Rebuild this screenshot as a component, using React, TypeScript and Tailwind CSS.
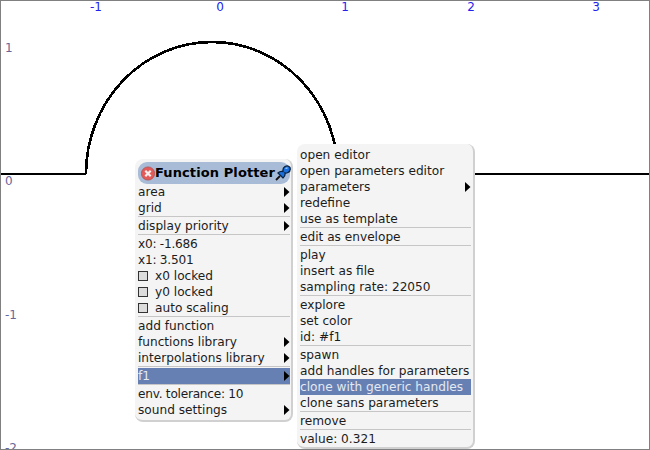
const font = "[font-family:'DejaVu_Sans',sans-serif]";

type Item =
  | { sep: true }
  | { label: string; arrow?: boolean; selected?: boolean; check?: boolean; tight?: boolean };

const leftItems: Item[] = [
  { label: "area", arrow: true },
  { label: "grid", arrow: true },
  { sep: true },
  { label: "display priority", arrow: true },
  { sep: true },
  { label: "x0: -1.686", tight: true },
  { label: "x1: 3.501", tight: true },
  { label: "x0 locked", check: true },
  { label: "y0 locked", check: true },
  { label: "auto scaling", check: true },
  { sep: true },
  { label: "add function" },
  { label: "functions library", arrow: true },
  { label: "interpolations library", arrow: true },
  { sep: true },
  { label: "f1", arrow: true, selected: true },
  { sep: true },
  { label: "env. tolerance: 10", tight: true },
  { label: "sound settings", arrow: true },
];

const rightItems: Item[] = [
  { label: "open editor" },
  { label: "open parameters editor" },
  { label: "parameters", arrow: true },
  { label: "redefine" },
  { label: "use as template" },
  { sep: true },
  { label: "edit as envelope" },
  { sep: true },
  { label: "play" },
  { label: "insert as file" },
  { label: "sampling rate: 22050" },
  { sep: true },
  { label: "explore" },
  { label: "set color" },
  { label: "id: #f1" },
  { sep: true },
  { label: "spawn" },
  { label: "add handles for parameters" },
  { label: "clone with generic handles", selected: true },
  { label: "clone sans parameters" },
  { sep: true },
  { label: "remove" },
  { sep: true },
  { label: "value: 0.321" },
];

function MenuRows({ items }: { items: Item[] }) {
  return (
    <>
      {items.map((item, i) =>
        "sep" in item ? (
          <div key={i} className="h-[2px] border-t border-[#c6c6c6]" />
        ) : (
          <div
            key={i}
            className={`h-4 flex items-center text-[12.15px] leading-4 whitespace-nowrap ${
              item.selected ? "bg-[#6680b3] text-[#e4e9f2]" : "text-[#1c1c1c]"
            }`}
          >
            {item.check && (
              <span className="w-[10px] h-[10px] mr-[7px] border border-[#333] bg-[#dcdcdc]" />
            )}
            <span className={`flex-1 ${item.tight ? "tracking-[-0.25px]" : ""}`}>{item.label}</span>
            {item.arrow && (
              <svg width="6" height="10" viewBox="0 0 6 10" className="shrink-0">
                <path d="M0 0 L5.5 5 L0 10 Z" fill="#000" />
              </svg>
            )}
          </div>
        )
      )}
    </>
  );
}

function Axes() {
  const top = [
    { x: 95, t: "-1" },
    { x: 219, t: "0" },
    { x: 344, t: "1" },
    { x: 470, t: "2" },
    { x: 595, t: "3" },
  ];
  const side = [
    { y: 47, t: "1" },
    { y: 180, t: "0" },
    { y: 314, t: "-1" },
    { y: 447, t: "-2" },
  ];
  return (
    <>
      {top.map((a) => (
        <span
          key={a.t}
          className="absolute top-0 -translate-x-1/2 text-[12px] leading-[13px] text-[#2222ee]"
          style={{ left: a.x }}
        >
          {a.t}
        </span>
      ))}
      {side.map((a) => (
        <span
          key={a.t}
          className="absolute left-[4px] -translate-y-1/2 text-[12px] leading-[13px] text-[#66669a]"
          style={{ top: a.y }}
        >
          {a.t}
        </span>
      ))}
    </>
  );
}

export default function App() {
  return (
    <div className={`relative w-[650px] h-[450px] overflow-hidden bg-white border border-[#808080] ${font}`}>
      {/* plot */}
      <svg width="650" height="450" className="absolute -left-[1px] -top-[1px]">
        <path d="M0 174 H86 M338 174 H650" fill="none" stroke="#000" strokeWidth="2" shapeRendering="crispEdges" />
        <path d="M86 174 A126 132 0 0 1 338 174" fill="none" stroke="#000" strokeWidth="2.6" shapeRendering="crispEdges" />
      </svg>
      <Axes />

      {/* function plotter menu */}
      <div className="absolute left-[134px] top-[158px] w-[158px] h-[263px] bg-[#f4f4f4] rounded-[8px] border-b-2 border-r-2 border-[#d0d0d0] pl-[3px] pr-[1px] pt-[3px]">
        <div className="h-[22px] rounded-[9px] bg-[#a8bcd8] flex items-center pl-[3px]">
          <svg width="14" height="15" viewBox="0 0 14 15" className="shrink-0">
            <circle cx="7" cy="7.5" r="6.6" fill="#e25a5a" stroke="#b05050" strokeWidth="0.8" />
            <path d="M4.3 4.8 L9.7 10.2 M9.7 4.8 L4.3 10.2" stroke="#f8eeee" strokeWidth="2.2" />
          </svg>
          <span className="text-[13px] font-bold tracking-[0.1px] text-black whitespace-nowrap">
            Function Plotter
          </span>
          <svg width="16" height="16" viewBox="0 0 16 16" className="shrink-0">
            <path d="M1 15 L5 11" stroke="#111" strokeWidth="1.8" />
            <path
              d="M3 8 Q5 6 8 6.5 Q7.5 3 10 1.5 Q13 0 15 2.5 Q16 6 13 7.5 Q11 8.5 10 8 Q10.5 11 8 13 Z"
              fill="#1a70dc"
              stroke="#0a2240"
              strokeWidth="1.3"
            />
            <path d="M10.5 3.5 L12.5 2.8" stroke="#a8d0f8" strokeWidth="1.3" />
          </svg>
        </div>
        <MenuRows items={leftItems} />
      </div>

      {/* submenu */}
      <div className="absolute left-[296px] top-[143px] w-[178px] h-[305px] bg-[#f4f4f4] rounded-[8px] border-b-2 border-r-2 border-[#d0d0d0] pl-[3px] pr-[2px] pt-[3px]">
        <MenuRows items={rightItems} />
      </div>
    </div>
  );
}
